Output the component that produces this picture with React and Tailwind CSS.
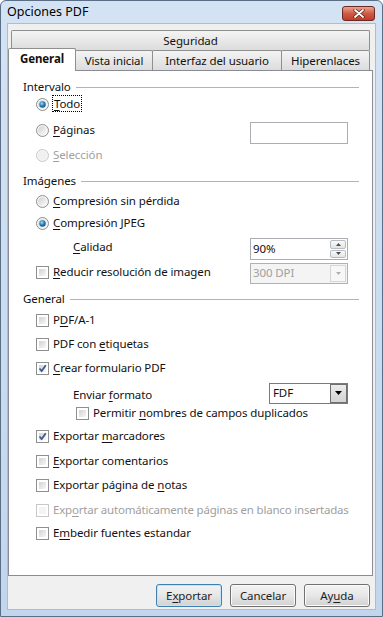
import React from "react";

const font = { fontFamily: '"Noto Sans", "Open Sans", sans-serif' };

function U({ children }) {
    return <span className="underline underline-offset-2">{children}</span>;
}

function Radio({ checked, disabled }) {
    return (
        <svg width="13" height="13" viewBox="0 0 13 13" className="shrink-0">
            <defs>
                <linearGradient id="rg" x1="0" y1="0" x2="1" y2="1">
                    <stop offset="0" stopColor="#cfcfcf" />
                    <stop offset="1" stopColor="#fdfdfd" />
                </linearGradient>
                <radialGradient id="rd" cx="0.4" cy="0.35" r="0.7">
                    <stop offset="0" stopColor="#9fe0fb" />
                    <stop offset="0.5" stopColor="#2f84c0" />
                    <stop offset="1" stopColor="#124b7a" />
                </radialGradient>
            </defs>
            <circle cx="6.5" cy="6.5" r="6" fill="#f4f4f4" stroke={disabled ? "#c8c8c8" : "#8e8f8f"} />
            <circle cx="6.5" cy="6.5" r="4.3" fill={disabled ? "#f0f0f0" : "url(#rg)"} />
            {checked && <circle cx="6.5" cy="6.5" r="3.2" fill="url(#rd)" />}
        </svg>
    );
}

function Box({ checked, disabled }) {
    return (
        <span
            className={`relative shrink-0 w-[13px] h-[13px] border ${disabled ? "border-[#c8c8c8]" : "border-[#8e8f8f]"} bg-white p-[2px] flex`}
        >
            <span
                className={`flex-1 ${disabled ? "bg-[#f4f4f4]" : "bg-gradient-to-br from-[#d3d3d3] to-[#f7f7f7]"}`}
            />
            {checked && (
                <svg width="11" height="11" viewBox="0 0 11 11" className="absolute left-0 top-0">
                    <path d="M2.5 5.5 L4.6 8 L8.8 2.2" fill="none" stroke="#3d5a8c" strokeWidth="1.8" />
                </svg>
            )}
        </span>
    );
}

function Header({ label, className }) {
    return (
        <div className={`flex items-center h-[16px] pl-[14px] pr-[13px] ${className}`}>
            <span>{label}</span>
            <span className="flex-1 ml-[5px] h-px bg-[#b0b4b8]" />
        </div>
    );
}

function Row({ className, children, indent = "pl-[27px]" }) {
    return <div className={`flex items-center h-[16px] ${indent} pr-[24px] ${className}`}>{children}</div>;
}

function Label({ children, disabled, className = "" }) {
    return (
        <span className={`ml-[4px] whitespace-nowrap ${disabled ? "text-[#a0a0a0]" : ""} ${className}`}>
            {children}
        </span>
    );
}

function Tab({ children, className }) {
    return (
        <div
            className={`h-[20px] flex items-center justify-center whitespace-nowrap border border-b-0 border-[#8e8f8f] rounded-t-[2px] bg-gradient-to-b from-[#f4f4f4] to-[#dcdcdc] ${className}`}
        >
            {children}
        </div>
    );
}

function Btn({ children, primary }) {
    return (
        <button
            className={`w-[66px] h-[23px] rounded-[3px] border ${primary ? "border-[#3c7fb1] shadow-[inset_0_0_0_1px_#bfe7fb]" : "border-[#707070] shadow-[inset_0_0_0_1px_#fbfbfb]"} bg-gradient-to-b from-[#f3f3f3] via-[#e7e7e7] to-[#d1d1d1] text-[#1e1e1e] leading-none`}
        >
            {children}
        </button>
    );
}

export default function App() {
    return (
        <div
            style={font}
            className="w-[383px] h-[617px] flex flex-col border border-[#5a6e86] rounded-t-[6px] bg-gradient-to-b from-[#d4e3f4] to-[#c1d6ed] text-[11.5px] tracking-[-0.1px] text-[#111]"
        >
            {/* --- Title bar --- */}
            <div className="h-[23px] flex items-center justify-between pl-[6px] pr-[7px]">
                <span className="text-[12.5px] tracking-normal text-black">Opciones PDF</span>
                <div className="w-[33px] h-[15px] mt-[2px] rounded-[3px] border border-[#6b2a1f] bg-gradient-to-b from-[#e8a493] via-[#cf5a45] to-[#c13b28] flex items-center justify-center">
                    <svg width="12" height="9" viewBox="0 0 12 9">
                        <path d="M2 1 L10 8 M10 1 L2 8" stroke="#5b2016" strokeWidth="3.2" strokeLinecap="round" />
                        <path d="M2 1 L10 8 M10 1 L2 8" stroke="#ffffff" strokeWidth="1.8" strokeLinecap="round" />
                    </svg>
                </div>
            </div>

            {/* --- Client area --- */}
            <div className="mx-[6px] flex-1 mb-[6px] bg-[#f0f0f0] border border-[#a9bed6] flex flex-col pt-[6px] pb-[2px] pr-[4px]">
                {/* tabs row 1 */}
                <div className="pl-[3px] pr-[1px]">
                    <Tab className="h-[19px]">Seguridad</Tab>
                </div>
                {/* tabs row 2 */}
                <div className="flex items-end h-[20px] pl-0">
                    <div className="relative z-10 w-[68px] h-[23px] -mb-px bg-white border border-b-0 border-[#8e8f8f] rounded-t-[2px] flex items-center justify-center font-bold pb-[2px]">
                        General
                    </div>
                    <Tab className="w-[78px] -ml-px">Vista inicial</Tab>
                    <Tab className="w-[130px] -ml-px">Interfaz del usuario</Tab>
                    <Tab className="w-[89px] -ml-px">Hiperenlaces</Tab>
                </div>

                {/* --- Panel --- */}
                <div className="h-[506px] w-[365px] bg-white border border-[#898c95] flex flex-col pt-[8px]">
                    <Header label="Intervalo" />
                    <Row className="mt-[1px]">
                        <Radio checked />
                        <Label>
                            <span className="outline outline-1 outline-dotted outline-black px-[1px]">
                                <U>T</U>odo
                            </span>
                        </Label>
                    </Row>
                    <Row className="mt-[10px]">
                        <Radio />
                        <Label>
                            <U>P</U>áginas
                        </Label>
                        <div className="ml-auto mt-[6px] w-[98px] h-[22px] shrink-0 border border-[#abadb3] bg-white" />
                    </Row>
                    <Row className="mt-[9px]">
                        <Radio disabled />
                        <Label disabled>
                            <U>S</U>elección
                        </Label>
                    </Row>

                    <Header label="Imágenes" className="mt-[10px]" />
                    <Row className="mt-[4px]">
                        <Radio />
                        <Label>
                            <U>C</U>ompresión sin pérdida
                        </Label>
                    </Row>
                    <Row className="mt-[6px]">
                        <Radio checked />
                        <Label>
                            <U>C</U>ompresión JPEG
                        </Label>
                    </Row>
                    <Row className="mt-[8px]" indent="pl-[64px]">
                        <span>
                            <U>C</U>alidad
                        </span>
                        <div className="ml-auto mt-[4px] w-[98px] h-[22px] shrink-0 border border-[#abadb3] bg-white flex items-center">
                            <span className="pl-[2px] flex-1">90%</span>
                            <div className="w-[16px] h-[18px] mr-[1px] flex flex-col gap-px">
                                <div className="flex-1 border border-[#b8bcc2] rounded-[2px] bg-gradient-to-b from-[#fafafa] to-[#e4e4e4] flex items-center justify-center">
                                    <svg width="5" height="3" viewBox="0 0 5 3">
                                        <path d="M0 3 L2.5 0 L5 3 Z" fill="#4d4d4d" />
                                    </svg>
                                </div>
                                <div className="flex-1 border border-[#b8bcc2] rounded-[2px] bg-gradient-to-b from-[#fafafa] to-[#e4e4e4] flex items-center justify-center">
                                    <svg width="5" height="3" viewBox="0 0 5 3">
                                        <path d="M0 0 L2.5 3 L5 0 Z" fill="#4d4d4d" />
                                    </svg>
                                </div>
                            </div>
                        </div>
                    </Row>
                    <Row className="mt-[9px]">
                        <Box />
                        <Label>
                            <U>R</U>educir resolución de imagen
                        </Label>
                        <div className="ml-auto mt-[2px] w-[98px] h-[21px] shrink-0 border border-[#adb2b5] bg-[#f4f4f4] flex items-center">
                            <span className="pl-[2px] flex-1 text-[#a0a0a0]">300 DPI</span>
                            <div className="w-[16px] h-[17px] mr-px border border-[#d4d6d9] bg-[#f7f7f7] flex items-center justify-center">
                                <svg width="5" height="3" viewBox="0 0 5 3">
                                    <path d="M0 0 L2.5 3 L5 0 Z" fill="#b0b0b0" />
                                </svg>
                            </div>
                        </div>
                    </Row>

                    <Header label="General" className="mt-[11px]" />
                    <Row className="mt-[5px]">
                        <Box />
                        <Label>
                            P<U>D</U>F/A-1
                        </Label>
                    </Row>
                    <Row className="mt-[8px]">
                        <Box />
                        <Label>
                            PDF con <U>e</U>tiquetas
                        </Label>
                    </Row>
                    <Row className="mt-[8px]">
                        <Box checked />
                        <Label>
                            <U>C</U>rear formulario PDF
                        </Label>
                    </Row>
                    <Row className="mt-[11px]" indent="pl-[64px]">
                        <span>
                            Enviar <U>f</U>ormato
                        </span>
                        <div className="ml-auto -mt-[4px] w-[79px] h-[21px] shrink-0 border border-[#7a7a7a] bg-white flex items-center">
                            <span className="pl-[3px] flex-1">FDF</span>
                            <div className="w-[17px] h-[19px] border border-[#707070] bg-gradient-to-b from-[#ececec] to-[#d3d3d3] flex items-center justify-center">
                                <svg width="7" height="4" viewBox="0 0 7 4">
                                    <path d="M0 0 L3.5 4 L7 0 Z" fill="#000" />
                                </svg>
                            </div>
                        </div>
                    </Row>
                    <Row className="mt-[2px]" indent="pl-[67px]">
                        <Box />
                        <Label>
                            Permitir <U>n</U>ombres de campos duplicados
                        </Label>
                    </Row>
                    <Row className="mt-[7px]">
                        <Box checked />
                        <Label>
                            Exportar <U>m</U>arcadores
                        </Label>
                    </Row>
                    <Row className="mt-[9px]">
                        <Box />
                        <Label>
                            <U>E</U>xportar comentarios
                        </Label>
                    </Row>
                    <Row className="mt-[8px]">
                        <Box />
                        <Label>
                            Exportar página de <U>n</U>otas
                        </Label>
                    </Row>
                    <Row className="mt-[9px]">
                        <Box disabled />
                        <Label disabled className="tracking-[-0.2px]">
                            Exp<U>o</U>rtar automáticamente páginas en blanco insertadas
                        </Label>
                    </Row>
                    <Row className="mt-[7px]">
                        <Box />
                        <Label>
                            E<U>m</U>bedir fuentes estandar
                        </Label>
                    </Row>
                </div>

                {/* --- Buttons --- */}
                <div className="flex justify-end gap-[8px] mt-[8px] pr-[1px]">
                    <Btn primary>
                        E<U>x</U>portar
                    </Btn>
                    <Btn>Cancelar</Btn>
                    <Btn>
                        Ay<U>u</U>da
                    </Btn>
                </div>
            </div>
        </div>
    );
}
